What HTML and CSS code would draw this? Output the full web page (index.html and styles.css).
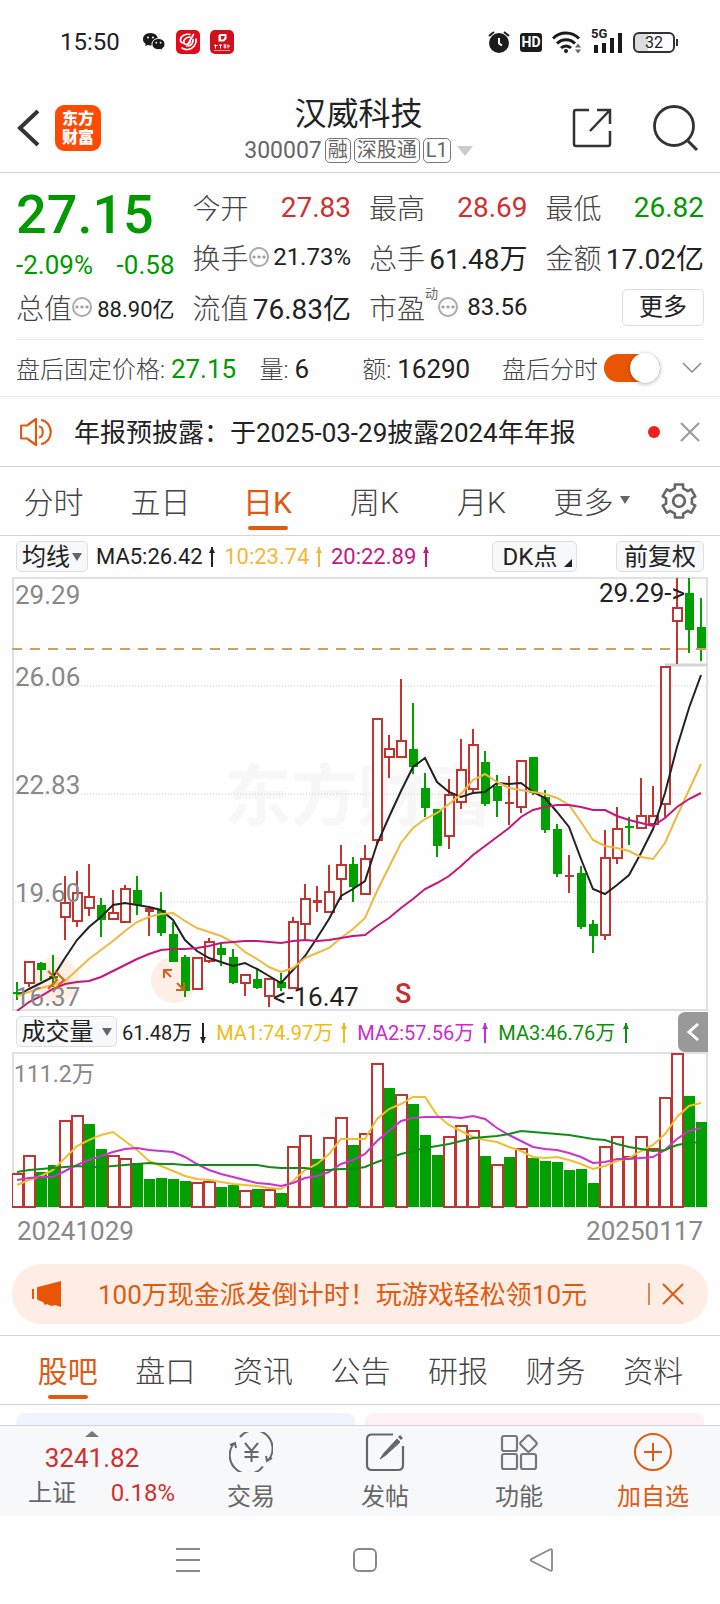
FILE: index.html
```html
<!DOCTYPE html>
<html lang="zh-CN">
<head>
  <meta charset="UTF-8">
  <meta name="viewport" content="width=device-width, initial-scale=1.0">
  <title>汉威科技 300007</title>
  <link rel="stylesheet" href="styles.css">
</head>
<body>

  <div class="status-bar">
    <span class="clock">15:50</span>
    <svg class="icon-wechat" width="24" height="20" viewBox="0 0 24 20">
      <path d="M8.500 1C4 1 1 3.800 1 7.200c0 2 1 3.700 2.700 4.800L3 14.300l2.700-1.300c1 .3 1.800.4 2.800.4 4.300 0 7.500-2.800 7.500-6.200S12.800 1 8.500 1z" fill="#1b1b1b"/>
      <path d="M16.500 6.500c-3.800 0-6.500 2.500-6.500 5.600s2.700 5.600 6.500 5.600c.8 0 1.600-.1 2.300-.3l2.200 1.300-.5-2.200c1.600-1 2.500-2.600 2.500-4.400 0-3.100-2.700-5.600-6.500-5.600z" fill="#1b1b1b" stroke="#fff" stroke-width="1"/>
      <g fill="#fff"><circle cx="6" cy="5.500" r="1"/><circle cx="11" cy="5.500" r="1"/><circle cx="14.300" cy="10.700" r=".9"/><circle cx="18.600" cy="10.700" r=".9"/></g>
    </svg>
    <svg class="icon-app" width="24" height="24" viewBox="0 0 24 24">
      <rect width="24" height="24" rx="5" fill="#e20a1b"/>
      <g fill="none" stroke="#fff" stroke-width="1.700" stroke-linecap="round">
        <path d="M14 4.500C9 3.500 5 6 4.500 9.500c-.3 2 1 3.500 3 3.500"/>
        <path d="M14 7c-4 0-7 3-6 6 1 2.500 5 1.500 6.500-1.500M17.500 4.500L12 14"/>
        <path d="M20 9c.8 5-3 10-8.500 10.500-2 .2-4-.5-5.500-1.500"/>
        <path d="M17 9.500c.5 3.500-2 6.500-6 6.500"/>
      </g>
    </svg>
    <svg class="icon-app" width="24" height="24" viewBox="0 0 24 24">
      <rect width="24" height="24" rx="5" fill="#cf101d"/>
      <path d="M10 4h6.500v5l-2.500 2.500H8.500V5.500z" fill="#fff"/>
      <path d="M11 6h3.500v2l-1.500 1.500h-2z" fill="#cf101d"/>
      <path d="M4 15.500h3.500M5.500 14.500v4M9 15h3M10.500 15v3.500M13.500 15h3M13.500 17h3M15 14.500v4M18 14.500v4M18 16h2" stroke="#fff" stroke-width="1"/>
      <path d="M4 20.500h16" stroke="#e9a5a8" stroke-width="1"/>
    </svg>
    <span class="spacer"></span>
    <svg width="22" height="24" viewBox="0 0 22 24">
      <circle cx="11" cy="13" r="10" fill="#1b1b1b"/>
      <path d="M1 6l5-4M21 6l-5-4" stroke="#1b1b1b" stroke-width="2"/>
      <path d="M11 8v5.500l3 2" fill="none" stroke="#fff" stroke-width="2"/>
    </svg>
    <span class="hd">HD</span>
    <svg width="29" height="24" viewBox="0 0 29 24">
      <g fill="none" stroke="#1b1b1b" stroke-width="3">
        <path d="M1 8.500a18 18 0 0 1 26 0"/>
        <path d="M5 13.500a12.500 12.500 0 0 1 18 0"/>
        <path d="M9 18a7 7 0 0 1 10 0"/>
      </g>
      <circle cx="14" cy="21" r="2" fill="#1b1b1b"/>
      <path d="M23 17.500l3-4 3 4zM23 19.500l3 4 3-4z" fill="#666"/>
    </svg>
    <span class="signal">
      <span class="signal-label">5G</span>
      <svg width="32" height="24" viewBox="0 0 32 24"><path d="M5 23v-8M13 23V13M21 23V8M29 23V3" stroke="#1b1b1b" stroke-width="4"/></svg>
    </span>
    <span class="battery">32</span>
  </div>

  <header class="header">
    <div class="header-left">
      <button class="icon-button" aria-label="返回">
        <svg width="24" height="38" viewBox="0 0 24 38"><path d="M21 2L3 19l18 17" fill="none" stroke="#333" stroke-width="4"/></svg>
      </button>
      <a class="logo" href="#">东方<br>财富</a>
    </div>
    <div class="header-title">
      <h1>汉威科技</h1>
      <div class="sub-title">
        <span>300007</span><span class="tag">融</span><span class="tag">深股通</span><span class="tag">L1</span>
        <span class="down-arrow"></span>
      </div>
    </div>
    <div class="header-right">
      <button class="icon-button" aria-label="分享">
        <svg width="40" height="40" viewBox="0 0 40 40"><path d="M17 2H4Q2 2 2 4v32q0 2 2 2h32q2 0 2-2V23M25 2h13v14M38 2L18 23" fill="none" stroke="#333" stroke-width="2.500"/></svg>
      </button>
      <button class="icon-button" aria-label="搜索">
        <svg width="48" height="48" viewBox="0 0 48 48"><circle cx="22" cy="22" r="19.500" fill="none" stroke="#333" stroke-width="2.800"/><path d="M36 37l9 9" stroke="#333" stroke-width="3"/></svg>
      </button>
    </div>
  </header>

  <section class="quote">
    <div class="last">
      <div class="last-price">27.15</div>
      <div class="last-change"><span>-2.09%</span><span>-0.58</span></div>
    </div>
    <div class="cell"><span class="name">今开</span><b class="red">27.83</b></div>
    <div class="cell"><span class="name">最高</span><b class="red">28.69</b></div>
    <div class="cell"><span class="name">最低</span><b class="green">26.82</b></div>
    <div class="cell"><span class="name">换手</span><i class="more-dot"></i><b class="small">21.73%</b></div>
    <div class="cell"><span class="name">总手</span><b>61.48万</b></div>
    <div class="cell"><span class="name">金额</span><b>17.02亿</b></div>
    <div class="cell"><span class="name">总值</span><i class="more-dot"></i><b class="tiny">88.90亿</b></div>
    <div class="cell"><span class="name">流值</span><b>76.83亿</b></div>
    <div class="cell"><span class="name">市盈</span><sup>动</sup><i class="more-dot"></i><b class="small">83.56</b></div>
    <div class="cell cell-end"><button class="more-button">更多</button></div>
  </section>

  <section class="after-hours">
    <span>盘后固定价格: <b class="green">27.15</b></span>
    <span>量: <b>6</b></span>
    <span>额: <b>16290</b></span>
    <label class="switch-label" for="afterSwitch">盘后分时</label>
    <input class="switch" id="afterSwitch" type="checkbox" checked>
    <button class="icon-button" aria-label="展开">
      <svg width="20" height="12" viewBox="0 0 20 12"><path d="M1 1l9 9 9-9" fill="none" stroke="#888" stroke-width="1.500"/></svg>
    </button>
  </section>

  <section class="news">
    <svg width="34" height="28" viewBox="0 0 34 28">
      <g fill="none" stroke="#e05a12" stroke-width="2.200" stroke-linejoin="round">
        <path d="M2 7.500h5L16 1v26l-9-6.500H2q-1 0-1-1v-11q0-1 1-1z"/>
        <path d="M19 8.500c5 0 5 11 0 11M21 2c13 2 13 22 0 24"/>
      </g>
    </svg>
    <a href="#">年报预披露：于2025-03-29披露2024年年报</a>
    <span class="red-dot"></span>
    <button class="icon-button" aria-label="关闭">
      <svg width="20" height="20" viewBox="0 0 20 20"><path d="M1 1l18 18M19 1L1 19" stroke="#999" stroke-width="2"/></svg>
    </button>
  </section>

  <nav class="period-tabs">
    <button>分时</button>
    <button>五日</button>
    <button class="active">日K</button>
    <button>周K</button>
    <button>月K</button>
    <button>更多<span class="caret"></span></button>
    <button class="gear" aria-label="设置">
      <svg width="36" height="36" viewBox="-17 -17 34 34">
        <path d="M-3.900-15.500H3.900V-11.900L8.400-9.300L11.500-11.100L15.400-4.400L12.200-2.600V2.600L15.400 4.400L11.500 11.100L8.400 9.300L3.900 11.900V15.500H-3.900V11.900L-8.400 9.300L-11.500 11.100L-15.400 4.400L-12.200 2.600V-2.600L-15.400-4.400L-11.500-11.100L-8.400-9.300L-3.900-11.900Z" fill="none" stroke="#666" stroke-width="2.400" stroke-linejoin="round"/>
        <circle r="5.500" fill="none" stroke="#666" stroke-width="2.600"/>
      </svg>
    </button>
  </nav>

  <section class="charts">
    <div class="chart-bar">
      <button class="chip">均线<span class="caret"></span></button>
      <span class="ma ma-black">MA5:26.42 <i class="arrow up"></i></span>
      <span class="ma ma-yellow">10:23.74 <i class="arrow up"></i></span>
      <span class="ma ma-pink">20:22.89 <i class="arrow up"></i></span>
      <span class="spacer"></span>
      <button class="chip chip-dk">DK点<span class="corner"></span></button>
      <button class="chip chip-fq">前复权</button>
    </div>

    <div class="chart-wrap">
      <svg id="kline" viewBox="0 0 696 434"></svg>
      <button class="float-button float-expand" aria-label="展开列表">
        <svg width="20" height="20" viewBox="0 0 20 20"><path d="M2 1l9 9-9 9M9 1l9 9-9 9" fill="none" stroke="#e05a12" stroke-width="2"/></svg>
      </button>
      <button class="float-button float-full" aria-label="全屏">
        <svg width="24" height="24" viewBox="0 0 24 24"><path d="M2 10V2h8M2 2l7 7M22 14v8h-8M22 22l-7-7" fill="none" stroke="#d2641e" stroke-width="2"/></svg>
      </button>
    </div>

    <div class="chart-bar volume-bar">
      <button class="chip chip-vol">成交量<span class="caret"></span></button>
      <span class="vol vol-black">61.48万<i class="arrow down"></i></span>
      <span class="vol vol-yellow">MA1:74.97万<i class="arrow up"></i></span>
      <span class="vol vol-purple">MA2:57.56万<i class="arrow up"></i></span>
      <span class="vol vol-green">MA3:46.76万<i class="arrow up"></i></span>
      <span class="spacer"></span>
      <button class="drawer" aria-label="展开侧栏">
        <svg width="14" height="20" viewBox="0 0 14 20"><path d="M12 2L3 10l9 8" fill="none" stroke="#fff" stroke-width="3"/></svg>
      </button>
    </div>

    <svg id="volume" viewBox="0 0 696 156"></svg>
    <div class="dates"><span>20241029</span><span>20250117</span></div>
  </section>

  <aside class="banner">
    <svg width="34" height="28" viewBox="0 0 34 28">
      <path d="M7 8q0-1 1-1L31 1v26l-6-2-3 1-3-1-2-1-2 1-2-3-5-2q-1 0-1-1zM2 9h2v10H2z" fill="#e85504"/>
    </svg>
    <a href="#">100万现金派发倒计时！玩游戏轻松领10元</a>
    <button class="icon-button banner-close" aria-label="关闭">
      <svg width="22" height="22" viewBox="0 0 22 22"><path d="M1 1l20 20M21 1L1 21" stroke="#e05a12" stroke-width="2"/></svg>
    </button>
  </aside>

  <nav class="info-tabs">
    <button class="active">股吧</button>
    <button>盘口</button>
    <button>资讯</button>
    <button>公告</button>
    <button>研报</button>
    <button>财务</button>
    <button>资料</button>
  </nav>

  <div class="cards"><div class="card card-blue"></div><div class="card card-pink"></div></div>

  <footer class="bottom-bar">
    <a class="index" href="#">
      <span class="index-arrow"></span>
      <span class="index-value">3241.82</span>
      <span class="index-row"><span>上证</span><span class="red">0.18%</span></span>
    </a>
    <button>
      <svg width="44" height="40" viewBox="0 0 44 40" fill="none" stroke="#666" stroke-width="2">
        <path d="M11 5A18 18 0 0 1 39.500 28M34 34.500A18 18 0 0 1 4.500 12M1 13l5-2 1 5M43 26l-5 3-1-5"/>
        <path d="M16 11l6.500 8 6.500-8M22.500 19v11M15.500 20h14M15.500 25h14"/>
      </svg>
      交易
    </button>
    <button>
      <svg width="40" height="40" viewBox="0 0 40 40" fill="none" stroke="#666" stroke-width="2.200">
        <path d="M28 2.500H7Q2 2.500 2 7v26q0 5 5 5h26q5 0 5-5V14"/>
        <path d="M32 7L19 21l-4 6 6-4L35 10z" fill="#666" stroke-width="1"/>
        <path d="M34.500 6.500l2-2" stroke-width="4"/>
      </svg>
      发帖
    </button>
    <button>
      <svg width="40" height="40" viewBox="0 0 40 40" fill="none" stroke="#777" stroke-width="2.200">
        <rect x="3" y="4" width="15" height="15" rx="2"/>
        <rect x="3" y="22" width="15" height="15" rx="2"/>
        <rect x="22" y="22" width="15" height="15" rx="2"/>
        <path d="M28 4q1.500-1.500 3 0l6 6q1.500 1.500 0 3l-6 6q-1.500 1.500-3 0l-6-6q-1.500-1.500 0-3z"/>
      </svg>
      功能
    </button>
    <button class="add">
      <svg width="40" height="40" viewBox="0 0 40 40" fill="none" stroke="#e05a12" stroke-width="2">
        <circle cx="20" cy="20" r="18"/><path d="M20 11v18M11 20h18"/>
      </svg>
      加自选
    </button>
  </footer>

  <div class="system-nav">
    <button aria-label="最近任务"><svg width="26" height="26" viewBox="0 0 26 26"><path d="M1 2h24M1 13h24M1 24h24" stroke="#888" stroke-width="2"/></svg></button>
    <button aria-label="主屏幕"><svg width="26" height="26" viewBox="0 0 26 26"><rect x="2" y="2" width="22" height="22" rx="5" fill="none" stroke="#888" stroke-width="2"/></svg></button>
    <button aria-label="返回"><svg width="26" height="26" viewBox="0 0 26 26"><path d="M23 3.500v19q0 2-2 1L2.500 14q-1.500-1 0-2L21 2.500q2-1 2 1z" fill="none" stroke="#888" stroke-width="1.800"/></svg></button>
  </div>

  <script src="chart.js"></script>
</body>
</html>
```

FILE: styles.css
```css
* {
  box-sizing: border-box;
}

body {
  margin: 0;
  font-family: Roboto, "Noto Sans CJK SC", sans-serif;
  font-size: 24px;
  color: #222;
  background: #fefefe;
}

button {
  font: inherit;
  color: inherit;
  background: none;
  border: 0;
  padding: 0;
}

a {
  color: inherit;
  text-decoration: none;
}

svg {
  display: block;
}

b {
  font-weight: 400;
}

.red { color: #d0302f; }
.green { color: #009a00; }

.spacer {
  flex: 1;
}

.icon-button {
  display: flex;
}

/* 状态栏 */
.status-bar {
  height: 84px;
  padding: 0 45px 0 60px;
  display: flex;
  align-items: center;
  gap: 10px;
}

.clock {
  font-size: 24px;
  margin-right: 12px;
}

.hd {
  width: 22px;
  height: 19px;
  line-height: 19px;
  border-radius: 3px;
  background: #1b1b1b;
  color: #fff;
  font-size: 14px;
  font-weight: 700;
  text-align: center;
}

.signal {
  position: relative;
}

.signal-label {
  position: absolute;
  left: 0;
  top: -3px;
  font-size: 13px;
  line-height: 14px;
  font-weight: 700;
  background: #fefefe;
}

.battery {
  position: relative;
  width: 42px;
  height: 21px;
  line-height: 17px;
  border: 2px solid #333;
  border-radius: 6px;
  font-size: 16px;
  text-align: center;
  background: linear-gradient(90deg, #ddd 34%, #fff 34%);
}

.battery::after {
  content: "";
  position: absolute;
  right: -5px;
  top: 5px;
  width: 2px;
  height: 7px;
  background: #333;
}

/* 标题 */
.header {
  display: grid;
  grid-template-columns: 1fr auto 1fr;
  align-items: center;
  height: 89px;
  padding: 0 20px 0 17px;
  border-bottom: 1px solid #d4d4d4;
}

.header-left,
.header-right {
  display: flex;
  align-items: center;
}

.header-left {
  gap: 14px;
}

.header-right {
  justify-content: flex-end;
  gap: 40px;
}

.logo {
  width: 46px;
  height: 46px;
  padding: 4px 0;
  border-radius: 9px;
  background: #ff4a04;
  color: #fff;
  font-size: 16px;
  line-height: 19px;
  font-weight: 900;
  text-align: center;
}

.header-title {
  padding-top: 5px;
  text-align: center;
}

h1 {
  margin: 0;
  font-size: 32px;
  line-height: 40px;
  font-weight: 400;
}

.sub-title {
  display: flex;
  align-items: center;
  gap: 3px;
  height: 34px;
  font-size: 23px;
  color: #666;
}

.tag {
  height: 25px;
  line-height: 22px;
  padding: 0 2px;
  border: 1px solid #777;
  border-radius: 5px;
  font-size: 20px;
}

.down-arrow {
  margin-left: 3px;
  border: 8px solid transparent;
  border-top: 10px solid #ccc;
  border-bottom: 0;
}

/* 行情 */
.quote {
  display: grid;
  grid-template-columns: repeat(4, 1fr);
  grid-auto-rows: 50px;
  column-gap: 18px;
  margin: 0 16px;
  padding: 9px 0 7px;
  border-bottom: 1px solid #eee;
}

.last {
  grid-row: span 2;
  color: #009a00;
}

.last-price {
  font-size: 54px;
  line-height: 66px;
  font-weight: 500;
}

.last-change {
  display: flex;
  justify-content: space-between;
  font-size: 26px;
  line-height: 34px;
}

.cell {
  display: flex;
  align-items: center;
  white-space: nowrap;
}

.name {
  font-size: 28px;
  font-weight: 300;
  color: #444;
}

.cell b {
  margin-left: auto;
  font-size: 28px;
}

.cell .small {
  font-size: 24px;
}

.cell .tiny {
  font-size: 22px;
}

.cell sup {
  align-self: flex-start;
  font-size: 13px;
  line-height: 24px;
  color: #666;
}

.cell-end {
  justify-content: flex-end;
}

.more-dot {
  width: 20px;
  height: 20px;
  border: 2px solid #aaa;
  border-radius: 50%;
  background: radial-gradient(circle, #999 1px, transparent 2px) center / 5px 16px;
}

.more-button {
  width: 82px;
  height: 37px;
  border: 1px solid #ddd;
  border-radius: 5px;
  line-height: 32px;
}

.after-hours {
  display: grid;
  grid-template-columns: 244fr 103fr 140fr auto auto auto;
  align-items: center;
  height: 57px;
  padding: 0 18px 1px 16px;
  border-bottom: 1px solid #eee;
  font-weight: 300;
  color: #444;
}

.after-hours b:not(.green) {
  color: #222;
}

.after-hours b {
  font-size: 26px;
}

.switch {
  position: relative;
  appearance: none;
  width: 56px;
  height: 28px;
  margin: 0 22px 0 6px;
  border-radius: 14px;
  background: #ea5504;
}

.switch::after {
  content: "";
  position: absolute;
  right: 0;
  top: -1px;
  width: 30px;
  height: 30px;
  border-radius: 50%;
  background: #fff;
  box-shadow: 0 1px 4px rgba(0, 0, 0, 0.3);
}

.news {
  display: flex;
  align-items: center;
  height: 70px;
  padding: 0 20px;
  border-bottom: 1px solid #d4d4d4;
  font-size: 26px;
}

.news a {
  flex: 1;
  margin-left: 20px;
  padding-bottom: 3px;
}

.red-dot {
  width: 12px;
  height: 12px;
  margin-right: 20px;
  border-radius: 50%;
  background: #f02020;
}

/* 周期 */
.period-tabs,
.info-tabs {
  display: grid;
  height: 69px;
  border-bottom: 1px solid #d4d4d4;
  font-size: 30px;
  font-weight: 300;
  color: #444;
}

.period-tabs {
  grid-template-columns: repeat(5, 107fr) 113fr 72fr;
}

.period-tabs button,
.info-tabs button {
  position: relative;
  display: flex;
  align-items: center;
  justify-content: center;
  padding-bottom: 2px;
}

.period-tabs .gear {
  padding: 0 10px 0 0;
}

.period-tabs .active,
.info-tabs .active {
  font-weight: 400;
  color: #e05a12;
}

.active::after {
  content: "";
  position: absolute;
  left: 50%;
  bottom: 5px;
  width: 40px;
  height: 4px;
  margin-left: -20px;
  border-radius: 2px;
  background: #e05a12;
}

.caret {
  display: inline-block;
  margin-left: 6px;
  border: 5px solid transparent;
  border-top: 8px solid #666;
  border-bottom: 0;
}

/* 图表 */
.charts {
  padding: 0 12px;
}

.charts > svg,
.chart-wrap > svg {
  width: 100%;
}

.chart-bar {
  display: flex;
  align-items: center;
  height: 41px;
  padding: 0 4px;
  white-space: nowrap;
}

.chip {
  display: flex;
  align-items: center;
  justify-content: center;
  height: 31px;
  padding: 0 5px;
  border: 1px solid #dcdfe3;
  border-radius: 5px;
  background: #f6f8fa;
  line-height: 28px;
}

.chip .caret {
  margin-left: 2px;
}

.chip-dk {
  position: relative;
  width: 85px;
  margin-right: 39px;
  padding-right: 14px;
}

.chip-fq {
  width: 88px;
}

.corner {
  position: absolute;
  right: 4px;
  bottom: 4px;
  border-left: 8px solid transparent;
  border-bottom: 8px solid #222;
}

.ma {
  margin-left: 8px;
  font-size: 22px;
}

.ma-black { color: #222; }
.ma-yellow { color: #f0b93c; }
.ma-pink { color: #c4177d; }

.arrow {
  position: relative;
  display: inline-block;
  width: 2px;
  height: 20px;
  margin: 0 3px;
  vertical-align: -3px;
  background: currentColor;
}

.arrow::after {
  content: "";
  position: absolute;
  left: -2px;
  border: 3px solid transparent;
}

.arrow.up::after {
  top: 0;
  border-top: 0;
  border-bottom: 6px solid currentColor;
}

.arrow.down::after {
  bottom: 0;
  border-bottom: 0;
  border-top: 6px solid currentColor;
}

.chart-wrap {
  position: relative;
}

/* 圆形底色画在K线图里，按钮只放图标 */
.float-button {
  position: absolute;
  bottom: 8px;
  width: 46px;
  height: 46px;
  display: flex;
  align-items: center;
  justify-content: center;
}

.float-expand { left: 3%; }
.float-full { left: 20%; }

.volume-bar {
  padding: 0 0 0 4px;
}

.chip-vol {
  width: 101px;
}

.chip-vol .caret {
  margin-left: 8px;
}

.vol {
  margin-left: 5px;
  font-size: 20px;
}

.vol .arrow {
  margin: 0 7px 0 10px;
}

.vol-black { color: #222; }
.vol-yellow { color: #eebc12; }
.vol-purple { color: #cb2cd0; }
.vol-green { color: #0c8f0c; }

.drawer {
  width: 30px;
  height: 40px;
  display: flex;
  align-items: center;
  justify-content: center;
  border-radius: 7px 0 0 7px;
  background: #999;
}

.dates {
  display: flex;
  justify-content: space-between;
  padding: 0 5px;
  font-size: 26px;
  line-height: 46px;
  color: #888;
}

.axis { font-size: 26px; fill: #888; }
.axis-volume { font-size: 23px; fill: #888; }
.mark { font-size: 26px; fill: #222; }
.sell { font-size: 27px; font-weight: 500; fill: #c4302d; }
.watermark { font-size: 67px; font-weight: 700; fill: #f7f7f7; }

/* 活动 */
.banner {
  display: flex;
  align-items: center;
  height: 60px;
  margin: 10px 12px 11px;
  padding: 0 24px 0 18px;
  border-radius: 30px;
  background: #fdede4;
  color: #e05a12;
  font-size: 26px;
}

.banner a {
  flex: 1;
  margin-left: 34px;
  padding-bottom: 3px;
}

.banner-close {
  padding-left: 12px;
  border-left: 2px solid #d98a50;
}

.info-tabs {
  grid-template-columns: repeat(7, 1fr);
  height: 70px;
  padding: 0 18px 0 19px;
  border-top: 1px solid #d4d4d4;
}

.cards {
  display: grid;
  grid-template-columns: 1fr 1fr;
  gap: 10px;
  height: 20px;
  padding: 8px 16px 0;
}

.card {
  border-radius: 8px 8px 0 0;
}

.card-blue { background: #eef4fd; }
.card-pink { background: #fdf2f1; }

/* 底部 */
.bottom-bar {
  display: grid;
  grid-template-columns: 184fr 134fr 134fr 134fr 134fr;
  height: 91px;
  border-top: 1px solid #d4d4d8;
  background: #f6f8fa;
  color: #666;
}

.bottom-bar button {
  display: flex;
  flex-direction: column;
  align-items: center;
  padding-top: 6px;
  line-height: 50px;
}

.bottom-bar .add {
  color: #e05a12;
}

.index {
  display: flex;
  flex-direction: column;
  align-items: center;
  padding-top: 5px;
}

.index-arrow {
  border: 7px solid transparent;
  border-bottom: 6px solid #777;
  border-top: 0;
}

.index-value {
  font-size: 26px;
  line-height: 42px;
  color: #d0302f;
}

.index-row {
  display: flex;
  justify-content: space-between;
  width: 100%;
  padding: 0 9px 0 28px;
  line-height: 28px;
}

.system-nav {
  display: flex;
  justify-content: center;
  gap: 151px;
  height: 88px;
  padding-left: 10px;
  align-items: center;
}
```

FILE: chart.js
```js
const RED = "#c23430";
const GREEN = "#00a000";
const STEP = 12;

// [涨跌, 最高, 实体上沿, 实体下沿, 最低]
const candles = [
  ["g", 1235, 1266, 1270, 1290], ["r", 1175, 1175, 1238, 1250], ["g", 1177, 1180, 1200, 1232],
  ["g", 1155, 1219, 1223, 1250], ["r", 918, 998, 1040, 1110], ["r", 902, 970, 1053, 1072],
  ["r", 882, 980, 1015, 1038], ["g", 983, 1006, 1050, 1101], ["r", 960, 1028, 1046, 1048],
  ["r", 945, 958, 1057, 1057], ["g", 918, 960, 1005, 1034], ["r", 1012, 1015, 1026, 1098],
  ["g", 965, 1020, 1090, 1098], ["g", 1057, 1092, 1175, 1175], ["g", 1155, 1160, 1263, 1282],
  ["r", 1163, 1163, 1258, 1258], ["r", 1105, 1116, 1174, 1180], ["g", 1122, 1134, 1154, 1188],
  ["g", 1137, 1160, 1238, 1243], ["r", 1213, 1215, 1240, 1278], ["g", 1200, 1228, 1253, 1256],
  ["r", 1225, 1228, 1277, 1312], ["g", 1210, 1235, 1253, 1262], ["r", 1040, 1055, 1253, 1253],
  ["r", 942, 988, 1062, 1110], ["r", 947, 990, 1000, 1025], ["r", 885, 965, 1025, 1028],
  ["r", 825, 886, 928, 990], ["g", 860, 882, 950, 995], ["r", 826, 868, 972, 976],
  ["r", 447, 447, 810, 826], ["r", 495, 538, 560, 625], ["r", 328, 513, 562, 562],
  ["g", 400, 537, 590, 612], ["g", 608, 655, 714, 740], ["g", 718, 718, 828, 860],
  ["r", 628, 674, 798, 836], ["r", 506, 600, 697, 716], ["r", 478, 525, 656, 665],
  ["g", 542, 576, 702, 708], ["g", 616, 648, 692, 742], ["r", 618, 697, 701, 766],
  ["r", 573, 573, 712, 730], ["g", 562, 562, 670, 674], ["g", 660, 680, 780, 789],
  ["g", 762, 778, 912, 920], ["r", 855, 915, 919, 968], ["g", 888, 908, 1070, 1078],
  ["g", 1050, 1062, 1098, 1148], ["r", 780, 863, 1095, 1110], ["r", 710, 778, 863, 882],
  ["g", 740, 769, 773, 824], ["r", 625, 738, 773, 776], ["r", 647, 738, 763, 765],
  ["r", 291, 291, 703, 740], ["r", 24, 113, 153, 282], ["g", 24, 70, 180, 250],
  ["g", 85, 171, 238, 272]
];

const ma5 = [1277, 1257, 1238, 1220, 1165, 1110, 1072, 1040, 1006, 998, 1004, 1011, 1020, 1050, 1110, 1142, 1163, 1176, 1188, 1180, 1196, 1218, 1238, 1200, 1158, 1105, 1048, 977, 957, 933, 822, 740, 662, 592, 563, 637, 665, 682, 669, 666, 640, 643, 638, 665, 683, 727, 772, 868, 956, 971, 945, 915, 848, 778, 668, 530, 414, 314];
const ma10 = [1277, 1265, 1253, 1245, 1232, 1200, 1168, 1140, 1112, 1083, 1057, 1042, 1032, 1028, 1052, 1073, 1087, 1098, 1117, 1145, 1168, 1190, 1206, 1195, 1165, 1150, 1134, 1105, 1078, 1045, 962, 892, 820, 773, 747, 730, 702, 672, 630, 613, 636, 653, 660, 667, 673, 683, 705, 755, 810, 828, 835, 844, 860, 866, 818, 738, 660, 583];
const ma20 = [1322, 1297, 1278, 1258, 1243, 1237, 1232, 1222, 1204, 1186, 1168, 1153, 1140, 1136, 1138, 1134, 1127, 1119, 1116, 1114, 1113, 1115, 1119, 1112, 1111, 1112, 1110, 1103, 1099, 1095, 1068, 1044, 1014, 986, 958, 940, 917, 889, 855, 829, 801, 774, 741, 720, 710, 706, 704, 712, 720, 720, 737, 749, 760, 767, 745, 712, 687, 668];

const volColors = "rrggrrggrrgggggrrggrgrgrrgrrgrrgrgggrrrgrgrggggggrrrrrrrgg";
const volumes = [506, 452, 502, 480, 345, 332, 357, 432, 450, 460, 475, 522, 520, 522, 528, 533, 530, 547, 542, 556, 553, 554, 564, 425, 392, 462, 398, 336, 420, 384, 176, 250, 268, 298, 392, 452, 393, 361, 376, 455, 477, 457, 430, 460, 468, 473, 496, 492, 534, 425, 395, 453, 395, 430, 277, 145, 273, 352];
const volMa1 = [540, 525, 513, 497, 460, 424, 405, 390, 383, 409, 436, 468, 484, 500, 513, 524, 527, 531, 537, 541, 545, 550, 552, 528, 496, 478, 448, 404, 402, 402, 342, 313, 298, 276, 277, 330, 360, 379, 396, 407, 413, 426, 440, 456, 459, 458, 465, 478, 492, 484, 468, 460, 440, 420, 388, 338, 305, 295];
const volMa2 = [527, 521, 518, 516, 499, 482, 465, 453, 441, 433, 430, 436, 438, 442, 458, 478, 497, 508, 517, 526, 534, 539, 543, 534, 520, 513, 502, 478, 465, 448, 410, 380, 350, 339, 338, 338, 337, 339, 335, 342, 370, 390, 409, 426, 432, 436, 446, 458, 474, 471, 464, 463, 459, 456, 436, 402, 380, 369];
const volMa3 = [501, 497, 494, 491, 486, 484, 487, 487, 483, 480, 477, 476, 477, 479, 480, 480, 480, 480, 480, 480, 482, 487, 491, 489, 490, 496, 497, 494, 493, 488, 473, 460, 449, 438, 431, 425, 418, 409, 401, 396, 393, 387, 380, 382, 386, 387, 391, 398, 404, 407, 417, 426, 434, 440, 437, 422, 416, 412];

const x = i => 5 + i * STEP;
const priceY = v => Math.round((v - 24) / 3 + 1);
const volY = v => Math.round((v - 145) / 3 + 1);

function line(x1, y1, x2, y2, color, width, dash) {
  return `<line x1="${x1}" y1="${y1}" x2="${x2}" y2="${y2}" stroke="${color}" stroke-width="${width}" ${dash ? `stroke-dasharray="${dash}"` : ""}/>`;
}

function curve(values, toY, color) {
  const points = values.map((v, i) => `${x(i)},${toY(v)}`).join(" ");
  return `<polyline points="${points}" fill="none" stroke="${color}" stroke-width="2"/>`;
}

function text(px, py, cls, str) {
  return `<text x="${px}" y="${py}" class="${cls}">${str}</text>`;
}

function drawKline() {
  let out = text(212, 243, "watermark", "东方财富");
  out += `<circle cx="44" cy="403" r="23" fill="#fdeee6"/><circle cx="162" cy="403" r="23" fill="#fdeee6"/>`;
  [109, 217, 325].forEach(y => out += line(0, y, 696, y, "#ccc", 1, "1 2"));
  out += `<rect x="1" y="1" width="694" height="432" fill="none" stroke="#e0e0e0" stroke-width="2"/>`;
  out += line(653, priceY(286), 695, priceY(286), "#d2d5da", 3);

  candles.forEach(([type, high, top, bottom, low], i) => {
    const color = type === "r" ? RED : GREEN;
    const y1 = priceY(top);
    const y2 = priceY(bottom);
    out += line(x(i), priceY(high), x(i), y1, color, 2);
    out += line(x(i), y2, x(i), priceY(low), color, 2);
    if (type === "r" && bottom - top > 12) {
      out += `<rect x="${x(i) - 4}" y="${y1}" width="9" height="${y2 - y1}" fill="#fff" stroke="${color}" stroke-width="2"/>`;
    } else {
      out += `<rect x="${x(i) - 4}" y="${y1}" width="9" height="${Math.max(2, y2 - y1)}" fill="${color}"/>`;
    }
  });

  out += line(0, priceY(238), 696, priceY(238), "#cf9f68", 2, "10 8");
  out += curve(ma5, priceY, "#222");
  out += curve(ma10, priceY, "#f0b840");
  out += curve(ma20, priceY, "#c4177d");

  out += text(3, 27, "axis", "29.29") + text(3, 109, "axis", "26.06") + text(3, 217, "axis", "22.83");
  out += text(3, 325, "axis", "19.60") + text(3, 429, "axis", "16.37");
  out += text(587, 25, "mark", "29.29-&gt;") + text(261, 429, "mark", "&lt;-16.47");
  out += text(383, 426, "sell", "S");
  document.getElementById("kline").innerHTML = out;
}

function drawVolume() {
  let out = `<rect x="1" y="1" width="694" height="154" fill="none" stroke="#e0e0e0" stroke-width="2"/>`;
  const base = volY(606);
  volumes.forEach((v, i) => {
    const y = volY(v);
    if (volColors[i] === "r") {
      out += `<rect x="${x(i) - 5}" y="${y + 1}" width="11" height="${base - y - 1}" fill="#fff" stroke="${RED}" stroke-width="2"/>`;
    } else {
      out += `<rect x="${x(i) - 5}" y="${y}" width="11" height="${base - y}" fill="${GREEN}"/>`;
    }
  });
  out += curve(volMa1, volY, "#ecc02e") + curve(volMa2, volY, "#c834cd") + curve(volMa3, volY, "#128c18");
  out += text(2, 30, "axis-volume", "111.2万");
  document.getElementById("volume").innerHTML = out;
}

drawKline();
drawVolume();
```
